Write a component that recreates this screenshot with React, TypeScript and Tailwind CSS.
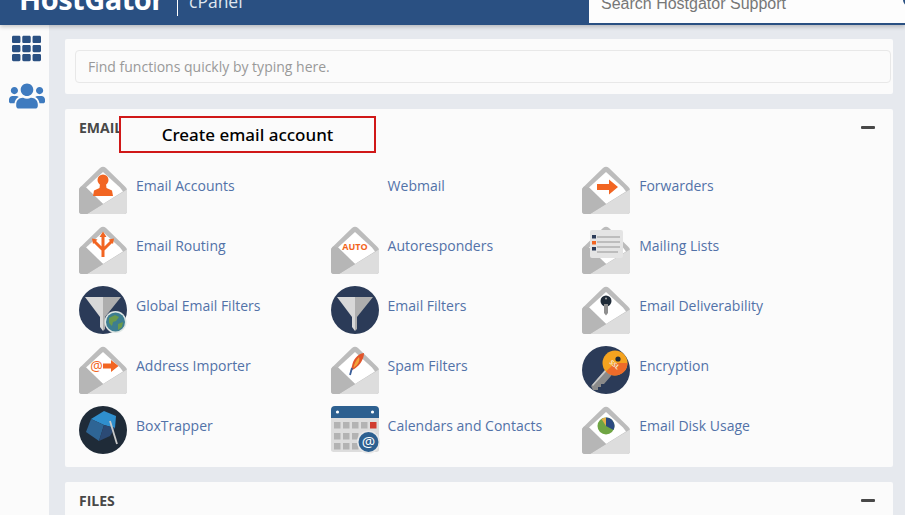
import React from "react";
import { FaTh, FaUsers } from "react-icons/fa";

const Env = ({ children }: { children?: React.ReactNode }) => (
  <svg width="48" height="48" viewBox="0 0 48 48" className="block">
    <path d="M0 24 Q0 22 2 20.5 L21 2 Q24 -0.5 27 2 L46 20.5 Q48 22 48 24 L48 45 Q48 48 45 48 L3 48 Q0 48 0 45 Z" fill="#bcbcbc" />
    <path d="M24 6 L41 21.5 L44 25.5 L24 38 L7 21.5 Z" fill="#ffffff" />
    <path d="M48 23.5 L48 45 Q48 48 45 48 L8 48 Z" fill="#dddddd" />
    <path d="M0 24 Q0 22 2 20.5 L7 21.5 L24 38 L8 48 L3 48 Q0 48 0 45 Z" fill="#b6b6b6" />
    {children}
  </svg>
);

const Funnel = () => (
  <>
    <circle cx="24" cy="24" r="24" fill="#2b3b58" />
    <path d="M6 11 L24 11 L24 45 L21 41 L21 31 Z" fill="#d8d8d8" />
    <path d="M42 11 L24 11 L24 45 L26 43 L26 31 Z" fill="#aeaeae" />
  </>
);

const icons: Record<string, React.ReactNode> = {
  accounts: (
    <Env>
      <circle cx="24" cy="14" r="5.5" fill="#f26522" />
      <path d="M21 18 L27 18 L27.5 22 L33 24.5 L34 30 L14 30 L15 24.5 L20.5 22 Z" fill="#f26522" />
    </Env>
  ),
  webmail: null,
  forwarders: (
    <Env>
      <path d="M15 18 L27 18 L27 13.5 L36 21 L27 28.5 L27 24 L15 24 Z" fill="#f26522" />
    </Env>
  ),
  routing: (
    <Env>
      <path d="M24 31 L24 9 M15 15 L24 24 L33 15" stroke="#f26522" strokeWidth="3" fill="none" />
      <path d="M24 5.5 L27.5 11 L20.5 11 Z M13 12.5 L18.5 13.5 L14 18 Z M35 12.5 L29.5 13.5 L34 18 Z" fill="#f26522" />
    </Env>
  ),
  auto: (
    <Env>
      <text x="24" y="23.5" textAnchor="middle" fontFamily="Open Sans, sans-serif" fontWeight="700" fontSize="9" fill="#f26522">AUTO</text>
    </Env>
  ),
  lists: (
    <Env>
      <rect x="8" y="4" width="33" height="28" rx="2" fill="#e4e4e4" />
      <path d="M15 11 H38 M15 16 H38 M15 21 H38 M15 26 H36" stroke="#b0b0b0" strokeWidth="1.4" />
      <rect x="10" y="9" width="4" height="3.5" fill="#2b3b58" />
      <rect x="10" y="15" width="4" height="3.5" fill="#f26522" />
      <rect x="10" y="21" width="4" height="3.5" fill="#2b3b58" />
    </Env>
  ),
  global: (
    <>
      <Funnel />
      <circle cx="36.5" cy="36" r="11" fill="#dfe6e4" />
      <circle cx="36.5" cy="36" r="9.5" fill="#3d7d90" />
      <path d="M30 32 L36 29 L40 31 L37 35 L34 36 L33 40 L30 37 Z M39 38 L44 36 L43 41 L39 44 Z" fill="#6b9a4c" />
    </>
  ),
  filters: <Funnel />,
  deliver: (
    <Env>
      <circle cx="24" cy="15" r="5.5" fill="#1f2b38" />
      <path d="M22 18 H26 V27 L24 29.5 L22 27 Z" fill="#8f8f8f" />
      <circle cx="24" cy="12.5" r="1" fill="#aaaaaa" />
    </Env>
  ),
  importer: (
    <Env>
      <text x="17.5" y="24.5" textAnchor="middle" fontFamily="Open Sans, sans-serif" fontSize="14" fill="#f26522">@</text>
      <path d="M24 17.5 L32 17.5 L32 14 L39.5 20 L32 26 L32 22.5 L24 22.5 Z" fill="#f26522" />
    </Env>
  ),
  spam: (
    <Env>
      <path d="M33 7 C26 8 22 14 21 20 L19.5 25 L24 22.5 C29 19 33 13 33 7 Z" fill="#e2542a" />
      <path d="M28 11 C25 14 23 18 22.5 22 L26 19 C28 16 29 14 28 11 Z" fill="#f2a33a" />
      <path d="M21 22 L19 29" stroke="#3b5f99" strokeWidth="1.8" />
    </Env>
  ),
  encrypt: (
    <>
      <circle cx="24" cy="24" r="24" fill="#2b3b58" />
      <path d="M30 16 L9 40 L11 44 L16 44 L16 41 L19 41 L19 38 L22 38 L35 23 Z" fill="#8a8a8a" />
      <path d="M30 16 L10 39 L11 40 L31 18 Z" fill="#c8c8c8" />
      <circle cx="33" cy="17" r="12.5" fill="#f5a31f" />
      <path d="M24 25.5 A12.5 12.5 0 0 0 45.5 17 L33 17 Z" fill="#ee6b2a" />
      <circle cx="36" cy="13" r="2.6" fill="#1f2b38" />
      <text x="27" y="17" fontFamily="Open Sans, sans-serif" fontSize="6.5" fontWeight="700" fill="#f5e6c8" transform="rotate(40 27 17)">SSL</text>
    </>
  ),
  box: (
    <>
      <circle cx="24" cy="24" r="24" fill="#1f2b38" />
      <path d="M25 5 L37 10 L36 22 L25 19 L12 13 Z" fill="#2f8fce" />
      <path d="M12 13 L25 19 L20 35 L7 26 Z" fill="#2e6595" />
      <path d="M25 19 L36 22 L31 30 L20 35 Z" fill="#2b4a75" />
      <path d="M31 15 L38 38" stroke="#c9c9c9" strokeWidth="1.8" />
    </>
  ),
  calendar: (
    <>
      <path d="M4 0 H44 Q48 0 48 4 V12 H0 V4 Q0 0 4 0 Z" fill="#2d6090" />
      <path d="M0 12 H48 V44 Q48 46 44 46 H4 Q0 46 0 44 Z" fill="#dddddd" />
      <circle cx="6.5" cy="6" r="1.6" fill="#fff" />
      <circle cx="41.5" cy="6" r="1.6" fill="#fff" />
      {[16, 27, 37].map((y) =>
        [3, 12, 21, 30, 39].map((x) => (
          <rect key={`${x}-${y}`} x={x} y={y} width="6.5" height="6.5" fill={x === 39 && y === 16 ? "#d13c2f" : "#b3b3b3"} />
        ))
      )}
      <circle cx="37.5" cy="36" r="11.5" fill="#e8e8e8" />
      <circle cx="37.5" cy="36" r="10" fill="#2d6090" />
      <text x="37.5" y="41" textAnchor="middle" fontFamily="Open Sans, sans-serif" fontSize="15" fill="#fff">@</text>
    </>
  ),
  disk: (
    <Env>
      <circle cx="24" cy="20" r="8.5" fill="#6fa544" />
      <path d="M24 20 L24 11.5 A8.5 8.5 0 0 1 31.5 24 Z" fill="#2b4a80" />
      <path d="M24 20 L24 11.5 A8.5 8.5 0 0 0 19.5 13 Z" fill="#e4b04a" />
    </Env>
  ),
};

const items: [string, string][] = [
  ["accounts", "Email Accounts"],
  ["webmail", "Webmail"],
  ["forwarders", "Forwarders"],
  ["routing", "Email Routing"],
  ["auto", "Autoresponders"],
  ["lists", "Mailing Lists"],
  ["global", "Global Email Filters"],
  ["filters", "Email Filters"],
  ["deliver", "Email Deliverability"],
  ["importer", "Address Importer"],
  ["spam", "Spam Filters"],
  ["encrypt", "Encryption"],
  ["box", "BoxTrapper"],
  ["calendar", "Calendars and Contacts"],
  ["disk", "Email Disk Usage"],
];

const Icon = ({ k }: { k: string }) =>
  k === "webmail" ? (
    <div className="h-12 w-12 shrink-0" />
  ) : (
    <svg width="48" height="48" viewBox="0 0 48 48" className="block shrink-0 overflow-visible">
      {icons[k]}
    </svg>
  );

const Minus = () => <div className="h-[3px] w-[14px] rounded-[1px] bg-[#484848]" />;

export default function App() {
  return (
    <div className="relative flex h-[515px] w-[905px] flex-col overflow-hidden bg-[#e6e9ee] font-['Open_Sans',sans-serif]">
      <header className="z-10 flex h-[25px] shrink-0 items-end overflow-hidden bg-[#2a5082] shadow-[0_2px_4px_rgba(0,0,0,0.2)]">
        <div className="mb-[14px] ml-[19px] w-[158px] shrink-0 text-[29px] leading-[24px] font-bold tracking-[-0.5px] text-white">
          HostGator
        </div>
        <div className="mb-[9px] h-[16px] w-px shrink-0 bg-white" />
        <div className="mb-[15px] ml-[11px] text-[17.5px] leading-[17px] text-[#dfe6ef]">cPanel</div>
        <div className="mb-[2px] ml-auto flex h-[23px] w-[316px] items-end overflow-hidden bg-[#fdfdfd] pl-[12px]">
          <div className="mb-[11px] font-['Liberation_Sans',sans-serif] text-[16px] leading-[16px] text-[#777777]">Search Hostgator Support</div>
          <svg width="16" height="16" viewBox="0 0 16 16" className="mb-[14px] ml-auto mr-[-13px] shrink-0">
            <circle cx="7" cy="7" r="5" fill="none" stroke="#2a5082" strokeWidth="2" />
          </svg>
        </div>
      </header>
      <div className="flex min-h-0 flex-1">
        <aside className="flex w-[49px] shrink-0 flex-col items-center bg-[#fbfbfb] pt-[9px] pl-[4px]">
          <FaTh className="h-[29px] w-[29px] text-[#2a5082]" />
          <FaUsers className="mt-[18px] h-[30px] w-[36px] text-[#3f7bbf]" />
        </aside>
        <main className="w-[844px] shrink-0 pt-[14px] pl-[16px]">
          <section className="flex h-[55px] w-[828px] items-center rounded-[2px] bg-[#fbfbfb] pl-[10px]">
            <div className="flex h-[33px] w-[816px] items-center rounded-[4px] border border-[#e8e8e8] bg-[#fbfbfb] pl-[12px] text-[14px] text-[#999999]">
              Find functions quickly by typing here.
            </div>
          </section>
          <section className="mt-[15px] h-[358px] w-[828px] rounded-[2px] bg-[#fbfbfb] px-[14px]">
            <div className="flex h-[57px] items-start justify-between pt-[9px]">
              <h2 className="text-[14px] leading-[20px] font-bold text-[#484848]">EMAIL</h2>
              <div className="mt-[8px] mr-[4px]"><Minus /></div>
            </div>
            <div className="grid grid-cols-[251.6px_251.6px_251.6px] gap-y-[12px]">
              {items.map(([k, label]) => (
                <div key={k} className="flex h-12 items-center gap-[9px]">
                  <Icon k={k} />
                  <span className="relative top-[-5px] text-[14px] text-[#5272a8]">{label}</span>
                </div>
              ))}
            </div>
          </section>
          <section className="mt-[15px] h-[60px] w-[828px] rounded-[2px] bg-[#fbfbfb] px-[14px]">
            <div className="flex items-start justify-between pt-[9px]">
              <h2 className="text-[14px] leading-[20px] font-bold text-[#484848]">FILES</h2>
              <div className="mt-[8px] mr-[4px]"><Minus /></div>
            </div>
          </section>
        </main>
      </div>
      <div className="absolute top-[116px] left-[119px] flex h-[37px] w-[257px] items-center justify-center border-2 border-[#d01818] bg-[#fbfbfb] font-['Noto_Sans',sans-serif] text-[17px] font-medium text-black">
        Create email account
      </div>
    </div>
  );
}
